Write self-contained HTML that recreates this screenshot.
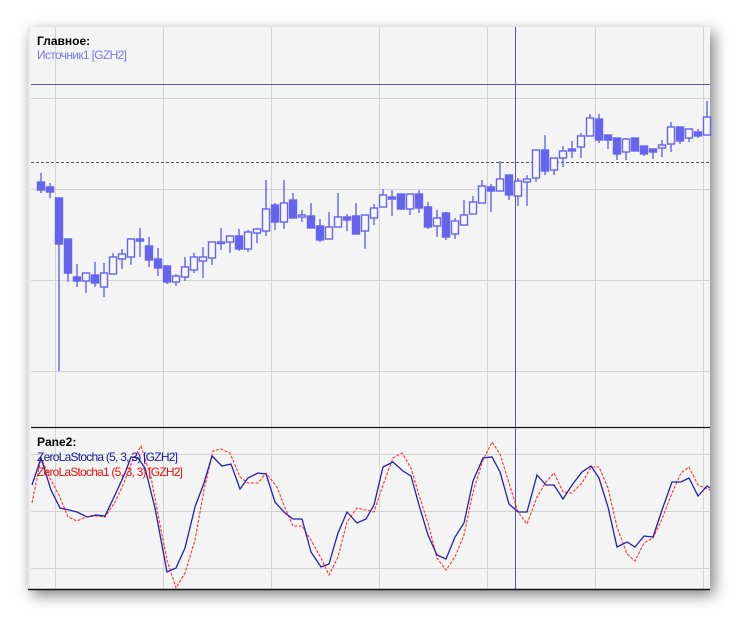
<!DOCTYPE html>
<html><head><meta charset="utf-8"><style>
html,body{margin:0;padding:0;background:#fff;width:736px;height:617px;overflow:hidden}
#c{position:absolute;left:28px;top:27px;width:682px;height:563px;background:#f4f4f4;box-shadow:4px 5px 14px rgba(0,0,0,0.5);}
svg{position:absolute;left:0;top:0}
text{font-family:"Liberation Sans","DejaVu Sans",sans-serif;font-size:12px}
</style></head><body>
<div id="c"></div>
<svg width="736" height="617" viewBox="0 0 736 617">
<g stroke="#d3d3d3" stroke-width="1">
<line x1="55.5" y1="27" x2="55.5" y2="589"/><line x1="163.5" y1="27" x2="163.5" y2="589"/>
<line x1="271.5" y1="27" x2="271.5" y2="589"/><line x1="379.5" y1="27" x2="379.5" y2="589"/>
<line x1="487.5" y1="27" x2="487.5" y2="589"/><line x1="595.5" y1="27" x2="595.5" y2="589"/>
<line x1="703.5" y1="27" x2="703.5" y2="589"/>
<line x1="31" y1="98.5" x2="710" y2="98.5"/><line x1="31" y1="189.5" x2="710" y2="189.5"/>
<line x1="31" y1="280.5" x2="710" y2="280.5"/><line x1="31" y1="371.5" x2="710" y2="371.5"/>
<line x1="31" y1="454.5" x2="710" y2="454.5"/><line x1="31" y1="511.5" x2="710" y2="511.5"/>
<line x1="31" y1="568.5" x2="710" y2="568.5"/>
</g>
<line x1="29" y1="27" x2="29" y2="590" stroke="#e8e8ee" stroke-width="2"/>
<line x1="31" y1="84.5" x2="710" y2="84.5" stroke="#5555aa" stroke-width="1"/>
<line x1="31" y1="162.5" x2="710" y2="162.5" stroke="#555" stroke-width="1" stroke-dasharray="3,2"/>
<line x1="515.5" y1="27" x2="515.5" y2="589" stroke="#5555aa" stroke-width="1"/>
<line x1="31" y1="427.5" x2="710" y2="427.5" stroke="#111" stroke-width="1.2"/>
<line x1="28" y1="589.5" x2="710" y2="589.5" stroke="#111" stroke-width="1.5"/>
<g id="candles" stroke="#6464ee" stroke-width="1.4"></g>
<polyline fill="none" stroke="#ff3333" stroke-width="1.1" stroke-dasharray="3,1.5" points="32,503 41,458 50,478 59,495 68,517 77,521 86,517 96,516 105,517 115,502 123,485 132,462 141,446 151,477 160,525 167,560 176,588 185,573 195,540 204,490 213,451 221,449 230,453 240,477 248,483 258,483 266,473 277,487 285,508 293,526 302,526 311,540 321,558 329,575 338,557 347,522 357,508 366,510 374,512 383,485 393,458 402,453 411,468 419,495 428,523 437,558 446,570 455,557 464,535 473,492 483,460 492,442 500,454 509,483 518,512 527,524 537,497 546,482 554,473 563,492 572,493 582,483 591,467 599,467 608,488 617,527 627,554 635,561 644,543 653,538 662,519 672,493 681,473 689,467 698,485 710,490"/>
<polyline fill="none" stroke="#2222aa" stroke-width="1.3" points="32,485 41,458 51,490 60,508 69,510 77,512 87,517 96,515 105,516 115,495 125,473 131,457 138,458 145,468 155,508 167,572 176,568 185,548 195,507 204,483 212,456 222,466 231,464 240,489 248,478 258,473 266,474 275,502 285,513 293,519 302,519 311,552 321,567 329,564 338,533 347,512 357,523 366,519 374,505 383,467 393,462 403,471 411,476 419,505 428,535 437,555 446,559 455,537 464,523 473,481 483,458 492,457 500,472 509,504 518,512 527,512 537,475 546,485 554,485 563,499 572,485 582,472 591,466 599,478 608,507 617,547 627,542 635,547 644,536 653,537 662,510 672,482 681,482 689,478 698,496 707,486 710,488"/>
<text x="37" y="45" font-weight="bold" fill="#000">Главное:</text>
<text x="37" y="59" fill="#7777ee" textLength="90">Источник1 [GZH2]</text>
<text x="37" y="446" font-weight="bold" fill="#000">Pane2:</text>
<text x="37" y="461" fill="#1a1a99" textLength="141">ZeroLaStocha (5, 3, 3) [GZH2]</text>
<text x="37" y="476" fill="#ee1111" textLength="146">ZeroLaStocha1 (5, 3, 3) [GZH2]</text>
</svg>
<script>
var d=[[41,182,190,1,173,193],[50,187,192,1,183,198],[59,198,244,1,198,371],[68,239,273,1,239,282],[77,277,281,1,264,287],[86,273,281,0,273,293],[95,275,283,1,262,287],[104,273,287,0,263,297],[113,257,274,0,253,274],[122,254,259,0,249,269],[131,239,257,0,238,265],[140,239,241,1,228,257],[149,246,260,1,237,267],[158,259,268,1,248,276],[167,266,282,1,266,284],[176,276,282,0,274,286],[185,267,277,0,257,281],[194,257,270,0,253,273],[203,257,261,0,247,278],[212,242,258,0,242,265],[221,242,243,0,228,250],[230,236,242,0,236,253],[239,236,249,1,229,251],[248,232,249,0,230,252],[257,229,233,0,228,243],[266,209,231,0,180,236],[275,205,222,1,203,230],[284,203,222,0,180,229],[293,200,218,1,193,218],[302,215,217,0,210,222],[311,216,228,1,203,228],[320,226,240,1,219,242],[329,227,239,0,212,239],[338,217,227,0,193,227],[347,217,220,1,214,231],[356,216,234,1,203,234],[365,215,231,0,215,249],[374,208,218,0,204,225],[383,195,207,0,189,207],[392,197,199,1,190,216],[401,194,209,1,194,210],[410,194,209,0,194,215],[419,194,208,1,190,213],[428,207,227,1,202,229],[437,218,226,0,210,237],[446,213,237,1,212,240],[455,221,234,0,218,239],[464,215,225,0,200,225],[473,202,214,0,196,214],[482,186,203,0,180,203],[491,187,191,1,184,212],[500,179,191,0,161,191],[509,175,195,1,175,200],[518,181,196,0,178,206],[527,179,182,0,175,206],[536,150,178,0,150,182],[545,150,171,1,135,175],[554,158,170,0,158,175],[563,151,158,0,146,167],[572,149,151,1,141,158],[581,136,147,0,133,158],[590,118,136,0,114,136],[599,119,140,1,114,143],[608,135,140,1,135,149],[617,138,154,1,138,160],[626,139,152,0,138,160],[635,138,151,1,138,151],[644,146,154,1,146,156],[653,149,152,1,149,159],[662,145,148,0,140,157],[671,127,144,0,122,152],[680,127,141,1,127,144],[689,129,138,0,129,142],[698,132,136,1,129,138],[707,117,135,0,101,135]];
var g=document.getElementById('candles'),s='';
d.forEach(function(c){var x=c[0];s+='<line x1="'+x+'" y1="'+c[4]+'" x2="'+x+'" y2="'+c[5]+'"/>';var h=Math.max(c[2]-c[1],1.5);s+='<rect x="'+(x-3.5)+'" y="'+c[1]+'" width="7" height="'+h+'" fill="'+(c[3]?'#6464ee':'#f7f7f7')+'"/>';});
g.innerHTML=s;
</script>
</body></html>
